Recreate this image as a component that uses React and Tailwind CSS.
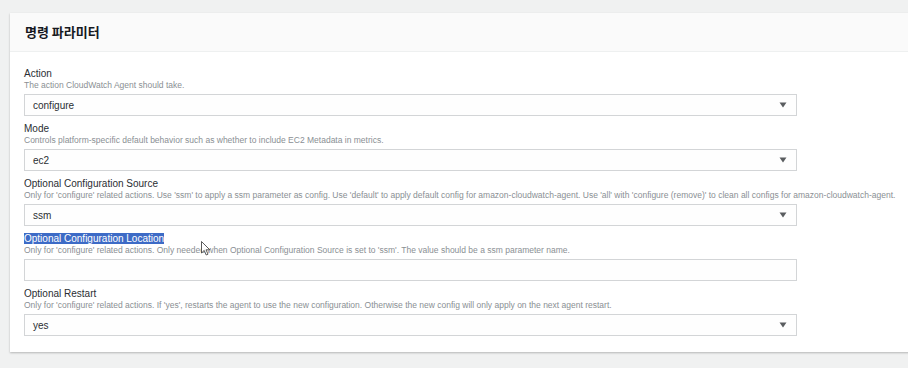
import React from 'react';

const fields = [
  {
    label: 'Action',
    desc: 'The action CloudWatch Agent should take.',
    value: 'configure',
    select: true,
  },
  {
    label: 'Mode',
    desc: 'Controls platform-specific default behavior such as whether to include EC2 Metadata in metrics.',
    value: 'ec2',
    select: true,
  },
  {
    label: 'Optional Configuration Source',
    desc: "Only for 'configure' related actions. Use 'ssm' to apply a ssm parameter as config. Use 'default' to apply default config for amazon-cloudwatch-agent. Use 'all' with 'configure (remove)' to clean all configs for amazon-cloudwatch-agent.",
    value: 'ssm',
    select: true,
  },
  {
    label: 'Optional Configuration Location',
    desc: "Only for 'configure' related actions. Only needed when Optional Configuration Source is set to 'ssm'. The value should be a ssm parameter name.",
    value: '',
    select: false,
    highlight: true,
  },
  {
    label: 'Optional Restart',
    desc: "Only for 'configure' related actions. If 'yes', restarts the agent to use the new configuration. Otherwise the new config will only apply on the next agent restart.",
    value: 'yes',
    select: true,
  },
];

const Field = ({ field }) => (
  <div className="flex flex-col">
    <div className="h-[13px] text-[10px] leading-[13px] text-[#2a2e33]">
      {field.highlight ? (
        <span className="bg-[#3d6bc6] text-white">{field.label}</span>
      ) : (
        field.label
      )}
    </div>
    <div className="h-[11px] text-[8.5px] leading-[11px] text-[#8a8f94] whitespace-nowrap">{field.desc}</div>
    <div className="mt-[3px] h-[22px] w-[773px] border border-[#d3d5d7] bg-[#fefefe] flex items-center justify-between pl-[8px] pr-[9px]">
      <span className="text-[10px] text-[#2a2e33]">{field.value}</span>
      {field.select && (
        <svg width="8" height="6" viewBox="0 0 8 6">
          <path d="M0.5 0.5 H7.5 L4 5.5 Z" fill="#5a5d60" />
        </svg>
      )}
    </div>
  </div>
);

export default function App() {
  return (
    <div
      className="w-[908px] h-[368px] overflow-hidden bg-[#f0f1f1] pt-[13px] pl-[10px] relative"
      style={{ fontFamily: '"Liberation Sans", "Noto Sans CJK KR", sans-serif' }}
    >
      <div className="w-[910px] bg-white shadow-[0_1px_2px_rgba(0,0,0,0.25)]">
        <div className="h-[39px] bg-[#fafafa] border-b border-[#eef0f0] flex items-center pl-[15px]">
          <h2 className="text-[13px] font-semibold text-[#16191f]" style={{ fontFamily: '"Noto Sans CJK KR", sans-serif' }}>
            명령 파라미터
          </h2>
        </div>
        <div className="pl-[14px] pt-[15px] pb-[16px] flex flex-col gap-[6px]">
          {fields.map((f) => (
            <Field key={f.label} field={f} />
          ))}
        </div>
      </div>
      <svg className="absolute left-[201px] top-[241px]" width="10" height="15" viewBox="0 0 10 15">
        <path d="M0.5 0.5 L0.5 12 L3.2 9.4 L5.2 14 L7 13.2 L5 8.8 L8.8 8.8 Z" fill="#fff" stroke="#333" strokeWidth="0.8" />
      </svg>
    </div>
  );
}
